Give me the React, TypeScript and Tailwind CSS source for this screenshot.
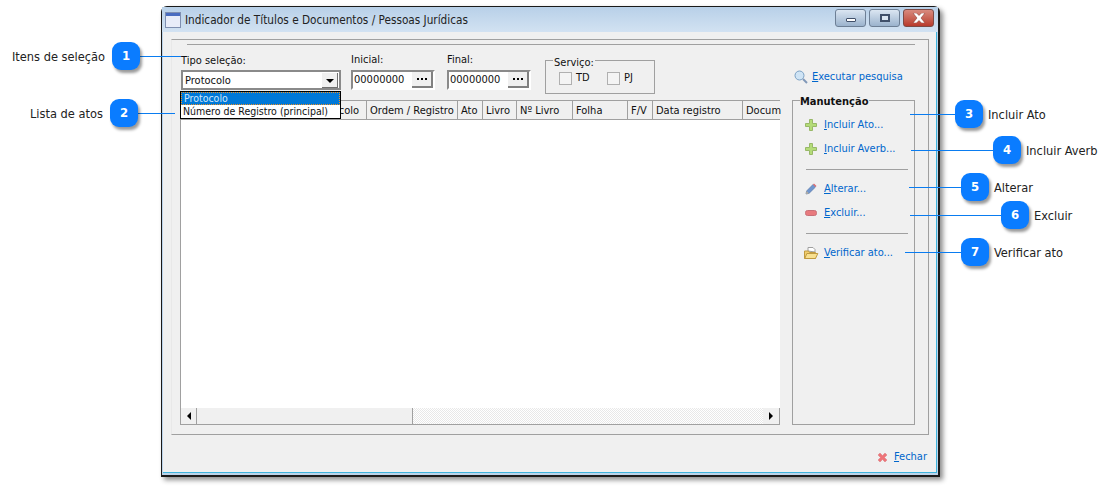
// Indicador de Títulos window with numbered help callouts
const headers = [
  { label: "Protocolo", width: "w-[186px]", align: "justify-end pr-[7px]" },
  { label: "Ordem / Registro", width: "w-[91px]", align: "pl-[3px]" },
  { label: "Ato", width: "w-[25px]", align: "pl-[3px]" },
  { label: "Livro", width: "w-[34px]", align: "pl-[3px]" },
  { label: "Nº Livro", width: "w-[56px]", align: "pl-[3px]" },
  { label: "Folha", width: "w-[55px]", align: "pl-[3px]" },
  { label: "F/V", width: "w-[25px]", align: "pl-[3px]" },
  { label: "Data registro", width: "w-[90px]", align: "pl-[3px]" },
  { label: "Docum", width: "w-[38px]", align: "pl-[3px]" },
];

// position of each bubble, leader line and caption over the screenshot
const callouts = [
  { n: 1, bubble: "left-[112px] top-[42px]", line: "left-[140px] top-[56px] w-[41px]", text: "left-[12px] top-[49px]", caption: "Itens de seleção" },
  { n: 2, bubble: "left-[110px] top-[99px]", line: "left-[138px] top-[113px] w-[37px]", text: "left-[30px] top-[106px]", caption: "Lista de atos" },
  { n: 3, bubble: "left-[955px] top-[100px]", line: "left-[910px] top-[114px] w-[45px]", text: "left-[988px] top-[107px]", caption: "Incluir Ato" },
  { n: 4, bubble: "left-[993px] top-[136px]", line: "left-[911px] top-[150px] w-[82px]", text: "left-[1026px] top-[143px]", caption: "Incluir Averb" },
  { n: 5, bubble: "left-[961px] top-[173px]", line: "left-[909px] top-[187px] w-[52px]", text: "left-[994px] top-[180px]", caption: "Alterar" },
  { n: 6, bubble: "left-[1001px] top-[201px]", line: "left-[910px] top-[215px] w-[91px]", text: "left-[1034px] top-[208px]", caption: "Excluir" },
  { n: 7, bubble: "left-[961px] top-[238px]", line: "left-[905px] top-[252px] w-[56px]", text: "left-[994px] top-[245px]", caption: "Verificar ato" },
];

function WindowIcon() {
  return (
    <svg width="16" height="16" viewBox="0 0 16 16">
      <rect x="0.5" y="0.5" width="15" height="15" fill="#e8ecf8" stroke="#7f8fb0" />
      <rect x="1" y="1" width="14" height="3" fill="#4a6cc0" />
    </svg>
  );
}

function PlusIcon() {
  return (
    <svg width="12" height="12" viewBox="0 0 12 12">
      <path d="M4.500.5h3v4h4v3h-4v4h-3v-4h-4v-3h4z" fill="#b4dc78" stroke="#98b868" />
    </svg>
  );
}

function PencilIcon() {
  return (
    <svg width="12" height="12" viewBox="0 0 12 12">
      <path d="M1 11l.6-3L8 1.500l2.500 2.500L4 10.400z" fill="#6f96cf" stroke="#5a78a8" strokeWidth="0.7" />
      <path d="M8 1.500l1-1 2.500 2.500-1 1z" fill="#d86a70" />
      <path d="M1 11l.6-3 2.400 2.400z" fill="#b8b0a0" />
    </svg>
  );
}

function MinusIcon() {
  return (
    <svg width="12" height="6" viewBox="0 0 12 6">
      <rect x="0.5" y="0.5" width="11" height="5" rx="2" fill="#e87a7e" stroke="#c87078" />
    </svg>
  );
}

function FolderIcon() {
  return (
    <svg width="15" height="14" viewBox="0 0 15 14">
      <path d="M4 5V1.500h5l2 2V6z" fill="#fff" stroke="#a0a0a0" />
      <path d="M.5 5h4l1 1.500h6v6h-11z" fill="#f2cf70" stroke="#c09a40" />
      <path d="M.8 12.500l2-5h11l-2.300 5z" fill="#f8e090" stroke="#c09a40" />
    </svg>
  );
}

function SearchIcon() {
  return (
    <svg width="14" height="14" viewBox="0 0 14 14">
      <circle cx="5.500" cy="5.500" r="4.500" fill="#cfe4f5" stroke="#7aa0c4" />
      <path d="M9 9l4 4" stroke="#8098b8" strokeWidth="2" />
    </svg>
  );
}

function CloseIcon() {
  return (
    <svg width="11" height="11" viewBox="0 0 11 11">
      <path d="M1 3l2-2 2.500 2.500L8 1l2 2-2.500 2.500L10 8l-2 2-2.500-2.500L3 10 1 8l2.500-2.500z" fill="#ee7478" stroke="#d87c80" strokeWidth="0.5" />
    </svg>
  );
}

function Link({ hot, rest }: { hot: string; rest: string }) {
  return (
    <span className="text-[#0066cc]">
      <span className="underline">{hot}</span>
      {rest}
    </span>
  );
}

function ActionRow({ icon, hot, rest, className }: { icon: React.ReactNode; hot: string; rest: string; className: string }) {
  return (
    <div className={`flex items-center ${className}`}>
      <span className="flex w-[18px] justify-center">{icon}</span>
      <span className="ml-[4px]">
        <Link hot={hot} rest={rest} />
      </span>
    </div>
  );
}

function NumberField({ label, className }: { label: string; className: string }) {
  return (
    <div className={`flex flex-col ${className}`}>
      <span className="h-[20px] leading-[20px]">{label}</span>
      <div className="flex h-[20px] w-[84px] border-2 border-t-[#8a8a8a] border-l-[#8a8a8a] border-r-white border-b-white bg-white">
        <span className="flex-1 pl-[1px] leading-[15px]">00000000</span>
        <div className="flex w-[21px] items-center justify-center gap-[2px] border-r-2 border-b-2 border-r-[#808080] border-b-[#808080] bg-[#f0f0f0]">
          <span className="h-[2px] w-[2px] bg-black" />
          <span className="h-[2px] w-[2px] bg-black" />
          <span className="h-[2px] w-[2px] bg-black" />
        </div>
      </div>
    </div>
  );
}

function Checkbox({ label, className }: { label: string; className: string }) {
  return (
    <div className={`flex items-center ${className}`}>
      <span className="mr-[4px] h-[13px] w-[13px] border border-[#b0b0b0] bg-[#f4f4f4]" />
      {label}
    </div>
  );
}

export default function App() {
  return (
    <div className="relative h-[487px] w-[1111px] overflow-hidden bg-white pl-[161px] pt-[6px] font-['DejaVu_Sans_Condensed','Liberation_Sans',sans-serif] text-[11px] text-[#111]">
      {/* Window */}
      <div className="flex h-[471px] w-[779px] flex-col rounded-t-[6px] border border-[#1a1a1a] border-r-2 border-b-2 bg-[#bcd4ea] shadow-[3px_3px_5px_rgba(0,0,0,0.45)]">
        {/* Title bar */}
        <div className="flex h-[25px] shrink-0 items-center bg-gradient-to-b from-[#b8d0e8] to-[#d2e2f2] pl-[3px] pr-[4px] pt-[1px]">
          <WindowIcon />
          <span className="ml-[4px] mt-[2px] flex-1 text-[11.7px] text-[#222]">Indicador de Títulos e Documentos / Pessoas Jurídicas</span>
          <div className="mb-[4px] flex h-[18px] gap-[3px]">
            <div className="flex w-[31px] items-center justify-center rounded-[3px] border border-[#6d7f95] bg-gradient-to-b from-[#dbe6f2] to-[#9bb3cd]">
              <span className="mt-[4px] h-[4px] w-[10px] rounded-[1px] border border-[#40506a] bg-white" />
            </div>
            <div className="flex w-[31px] items-center justify-center rounded-[3px] border border-[#6d7f95] bg-gradient-to-b from-[#dbe6f2] to-[#9bb3cd]">
              <span className="h-[8px] w-[10px] border-2 border-[#40506a] bg-[#dbe6f2]" />
            </div>
            <div className="flex w-[31px] items-center justify-center rounded-[3px] border border-[#7d4a45] bg-gradient-to-b from-[#d88a7e] to-[#b83a2c]">
              <svg width="14" height="10" viewBox="0 0 14 10">
                <path d="M1 0h3.500L7 2.500 9.500 0H13L9 5l4 5H9.500L7 7.500 4.500 10H1l4-5z" fill="#fff" stroke="#7d3028" strokeWidth="0.5" />
              </svg>
            </div>
          </div>
        </div>

        {/* Client area */}
        <div className="mx-[1px] mb-[2px] flex flex-1 flex-col border-r border-b border-[#3fb4dc] bg-[#f0f0f0] pl-[8px] pr-[7px] pt-[7px]">
          <div className="h-[396px] border border-t-[#a0a0a0] border-r-[#a0a0a0] border-b-[#a0a0a0] border-l-[#e8e8e8] pl-[8px] pr-[13px] pt-[4px]">
            <div className="ml-[7px] h-[1px] bg-[#a0a0a0]" />

            {/* Filters */}
            <div className="flex h-[55px] pt-[5px]">
              <div className="flex w-[171px] flex-col pl-[1px]">
                <span className="h-[20px] leading-[22px]">Tipo seleção:</span>
                <div className="flex h-[20px] w-[160px] items-center justify-between border-2 border-[#8a8a8a] bg-white pl-[2px] pr-[1px]">
                  <span className="mt-[2px]">Protocolo</span>
                  <div className="flex h-[15px] w-[16px] items-center justify-center border-r border-b border-[#707070] bg-[#f0f0f0]">
                    <span className="mt-[2px] border-x-[4px] border-t-[4px] border-x-transparent border-t-black" />
                  </div>
                </div>
              </div>
              <NumberField label="Inicial:" className="w-[96px]" />
              <NumberField label="Final:" className="w-[98px]" />
              <div className="relative mt-[10px] flex h-[34px] w-[110px] items-center border border-[#a0a0a0] pl-[13px] pt-[2px]">
                <span className="absolute left-[7px] top-[-5px] bg-[#f0f0f0] px-[1px] leading-[13px]">Serviço:</span>
                <Checkbox label="TD" className="w-[48px]" />
                <Checkbox label="PJ" className="" />
              </div>
              <div className="ml-auto mt-[20px] flex h-[14px] w-[121px] items-center">
                <SearchIcon />
                <span className="ml-[4px]">
                  <Link hot="E" rest="xecutar pesquisa" />
                </span>
              </div>
            </div>

            {/* List and side panel */}
            <div className="flex h-[325px] gap-[12px]">
              <div className="flex w-[600px] shrink-0 flex-col border-l border-t border-[#a0a0a0] bg-white">
                <div className="flex h-[19px] shrink-0 border-b border-[#a0a0a0] bg-[#f0f0f0]">
                  {headers.map((h) => (
                    <div key={h.label} className={`flex shrink-0 items-center overflow-hidden whitespace-nowrap border-r border-[#a0a0a0] pt-[2px] last:border-r-0 ${h.width} ${h.align}`}>
                      {h.label}
                    </div>
                  ))}
                </div>
                <div className="flex-1" />
                <div className="flex h-[17px] shrink-0 border-b border-[#a0a0a0] bg-[#f0f0f0]">
                  <div className="flex w-[16px] items-center justify-center border-r border-[#a0a0a0]">
                    <span className="border-y-[4px] border-r-[4px] border-y-transparent border-r-black" />
                  </div>
                  <div className="w-[216px] border-r border-[#a0a0a0]" />
                  <div className="flex-1 bg-[repeating-conic-gradient(#e8e8e8_0_25%,#ffffff_0_50%)] bg-[length:2px_2px]" />
                  <div className="flex w-[17px] items-center justify-center border-r border-[#a0a0a0]">
                    <span className="border-y-[4px] border-l-[4px] border-y-transparent border-l-black" />
                  </div>
                </div>
              </div>

              {/* Manutenção */}
              <div className="relative w-[123px] shrink-0 border border-[#a0a0a0] pt-[16px]">
                <span className="absolute left-[7px] top-[-6px] bg-[#f0f0f0] pr-[1px] font-bold leading-[13px]">Manutenção</span>
                <ActionRow icon={<PlusIcon />} hot="I" rest="ncluir Ato..." className="ml-[9px] h-[16px]" />
                <ActionRow icon={<PlusIcon />} hot="I" rest="ncluir Averb..." className="ml-[9px] mt-[8px] h-[16px]" />
                <div className="ml-[13px] mr-[6px] mt-[12px] h-[1px] bg-[#a0a0a0]" />
                <ActionRow icon={<PencilIcon />} hot="A" rest="lterar..." className="ml-[9px] mt-[11px] h-[16px]" />
                <ActionRow icon={<MinusIcon />} hot="E" rest="xcluir..." className="ml-[9px] mt-[8px] h-[16px]" />
                <div className="ml-[13px] mr-[6px] mt-[12px] h-[1px] bg-[#a0a0a0]" />
                <ActionRow icon={<FolderIcon />} hot="V" rest="erificar ato..." className="ml-[9px] mt-[11px] h-[16px]" />
              </div>
            </div>
          </div>

          {/* Footer */}
          <div className="flex flex-1 items-center justify-end pr-[2px] pt-[8px]">
            <CloseIcon />
            <span className="ml-[6px]">
              <Link hot="F" rest="echar" />
            </span>
          </div>
        </div>
      </div>

      {/* Open combo list, over the grid header */}
      <div className="absolute left-[180px] top-[91px] w-[161px] border border-black bg-white text-[10.5px] leading-[13px]">
        <div className="h-[13px] bg-[#0078d7] pl-[3px] text-[#cfe6fa] outline-1 -outline-offset-1 outline-dotted outline-[#f09020]">Protocolo</div>
        <div className="h-[13px] whitespace-nowrap pl-[2px]">Número de Registro (principal)</div>
      </div>

      {/* Callouts */}
      {callouts.map((c) => (
        <div key={c.n}>
          <div className={`absolute h-[1px] bg-[#0a7cf0] ${c.line}`} />
          <div className={`absolute flex h-[28px] w-[28px] items-center justify-center rounded-[9px] bg-[#0a7cff] text-[13px] font-bold text-white shadow-[2px_3px_3px_rgba(0,0,0,0.4)] ${c.bubble}`}>
            {c.n}
          </div>
          <span className={`absolute whitespace-nowrap text-[12.7px] leading-[16px] text-[#222] ${c.text}`}>{c.caption}</span>
        </div>
      ))}
    </div>
  );
}
